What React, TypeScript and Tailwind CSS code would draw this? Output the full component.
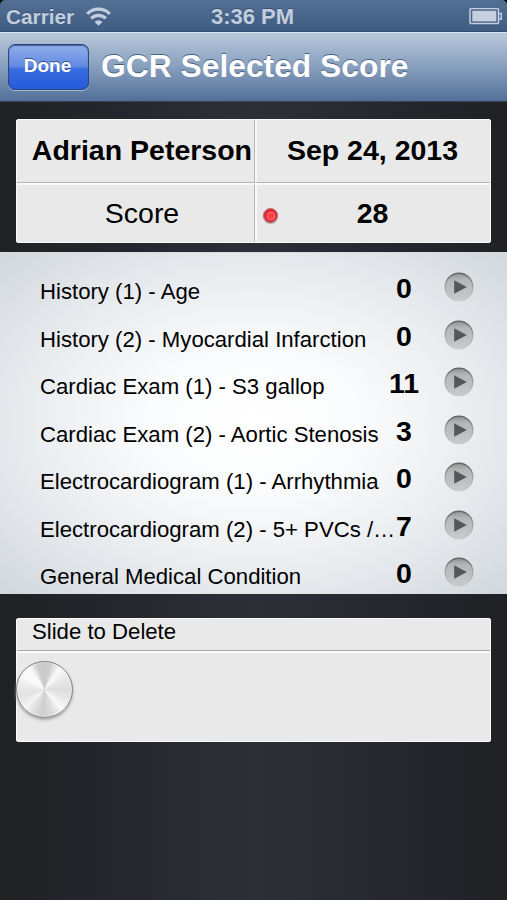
const rows = [
  { label: 'History (1) - Age', value: 0 },
  { label: 'History (2) - Myocardial Infarction', value: 0 },
  { label: 'Cardiac Exam (1) - S3 gallop', value: 11 },
  { label: 'Cardiac Exam (2) - Aortic Stenosis', value: 3 },
  { label: 'Electrocardiogram (1) - Arrhythmia', value: 0 },
  { label: 'Electrocardiogram (2) - 5+ PVCs /…', value: 7 },
  { label: 'General Medical Condition', value: 0 },
];

function WifiIcon() {
  return (
    <svg className="ml-[12px] h-[20px] w-[25px]" viewBox="0 0 25 20" fill="none" stroke="#c2cede" strokeWidth="3.2">
      <path d="M1.2 6.8A16 16 0 0 1 23.8 6.8" />
      <path d="M5.2 11.4A10.3 10.3 0 0 1 19.8 11.4" />
      <path d="M12.5 18.8L8.6 14.9A5.6 5.6 0 0 1 16.4 14.9Z" fill="#c2cede" stroke="none" />
    </svg>
  );
}

function BatteryIcon() {
  return (
    <svg className="h-[18px] w-[34px]" viewBox="0 0 34 18">
      <rect x="1" y="0.6" width="28.5" height="15" rx="1.2" fill="none" stroke="#c5d0df" strokeWidth="1.5" />
      <rect x="3.3" y="2.8" width="24" height="10.6" fill="#c5d0df" />
      <path d="M30 5.6H32.3V11H30" fill="none" stroke="#c5d0df" strokeWidth="1.5" />
    </svg>
  );
}

function PlayIcon() {
  return (
    <svg className="h-[30px] w-[30px]" viewBox="0 0 30 30">
      <defs>
        <linearGradient id="well" x1="0" y1="0" x2="0" y2="1">
          <stop offset="0" stopColor="#929394" />
          <stop offset=".25" stopColor="#b5b6b7" />
          <stop offset="1" stopColor="#c9cacb" />
        </linearGradient>
        <linearGradient id="rim" x1="0" y1="0" x2="0" y2="1">
          <stop offset="0" stopColor="#626364" />
          <stop offset=".5" stopColor="#a7a8a9" />
          <stop offset="1" stopColor="#cbcccd" />
        </linearGradient>
      </defs>
      <circle cx="15" cy="15" r="13.8" fill="url(#well)" stroke="url(#rim)" strokeWidth="1.4" />
      <path d="M10.2 8.2L22.8 15L10.2 21.8Z" fill="#555658" />
    </svg>
  );
}

export default function App() {
  return (
    <div className="flex h-[900px] w-[507px] flex-col overflow-hidden bg-[linear-gradient(90deg,#202123_0%,#26272e_25%,#2c3036_50%,#26272e_78%,#202124_100%)] font-['Liberation_Sans',Arial,sans-serif] text-black">
      <div className="h-[32px] shrink-0 bg-[linear-gradient(#000_50%,#344b6b_50%)]">
        <header className="grid h-[31px] grid-cols-[169px_167px_171px] items-center rounded-t-[5px] bg-[linear-gradient(#536f94,#3f5c82)] font-bold text-[#c2cede] [text-shadow:0_-1px_0_#38516f]">
          <div className="flex items-center pl-[6px] text-[20.8px]">
            <span>Carrier</span>
            <WifiIcon />
          </div>
          <span className="text-center text-[22px]">3:36 PM</span>
          <div className="flex justify-end pr-[4px]">
            <BatteryIcon />
          </div>
        </header>
      </div>
      <nav className="flex h-[69px] shrink-0 items-center border-t border-[#dce5ef] bg-[linear-gradient(#b9c8db_0%,#879fbe_50%,#546f98_100%)] pl-[8px]">
        <button className="mb-px h-[46px] w-[81px] rounded-[7px] border border-[#2c4678] bg-[linear-gradient(#92aee9_0%,#638be3_48%,#386bdd_55%,#245bdc_100%)] pr-[2px] text-[19px] font-bold text-white shadow-[0_1px_0_#a5b9d5,inset_0_1px_1px_#425e9b] [text-shadow:0_-1px_0_#334e83]">
          Done
        </button>
        <h1 className="ml-[12px] whitespace-nowrap text-[31.8px] font-bold leading-none text-white [text-shadow:0_-1.5px_0_#49607f]">
          GCR Selected Score
        </h1>
      </nav>
      <div className="h-px shrink-0 bg-[#35425a]" />

      <section className="mx-[16px] mt-[17px] grid h-[124px] w-[475px] shrink-0 grid-cols-[238px_1fr] grid-rows-[63px_1fr] rounded-[2px] border border-[#fafafa] bg-[#e9e9e9] text-[28.5px] leading-none">
        <div className="flex justify-end border-r border-b border-[#b5b5b5] pt-[16px] pr-[2px] font-bold whitespace-nowrap">Adrian Peterson</div>
        <div className="border-b border-l-2 border-b-[#b5b5b5] border-l-[#f8f8f8] pt-[16px] pr-[2px] text-center font-bold">Sep 24, 2013</div>
        <div className="border-t-2 border-r border-t-[#fafafa] border-r-[#b5b5b5] pt-[14px] pl-[13px] text-center">Score</div>
        <div className="grid grid-cols-[28px_1fr_30px] border-t-2 border-l-2 border-[#fafafa] pt-[14px] text-center font-bold">
          <span className="mt-[9px] ml-[6px] flex h-[15px] w-[15px] items-center justify-center rounded-full border border-[#c06a6e] bg-[#df2a32] shadow-[0_1px_1px_#aaa]">
            <span className="h-[8px] w-[8px] rounded-[3px] border border-[#f9777a] bg-[#ff4146]" />
          </span>
          <span>28</span>
        </div>
      </section>

      <main className="mt-[9px] h-[342px] shrink-0 border-t border-[#d8dbdf] bg-[radial-gradient(ellipse_at_50%_50%,#ffffff_0%,#fafbfc_30%,#e8ebee_65%,#d2d7dc_100%)] pt-[11px]">
        {rows.map((row) => (
          <div key={row.label} className="grid h-[47.5px] grid-cols-[356px_16px_1fr] pl-[40px]">
            <span className="whitespace-nowrap pt-[14.4px] text-[22.17px] leading-[27px]">{row.label}</span>
            <span className="flex justify-center pt-[9px] text-[28.5px] leading-[30px] font-bold">{row.value}</span>
            <span className="pt-[8px] pl-[32px]">
              <PlayIcon />
            </span>
          </div>
        ))}
      </main>

      <section className="mx-[16px] mt-[24px] h-[124px] w-[475px] shrink-0 rounded-[2px] border border-[#fafafa] bg-[#e9e9e9]">
        <div className="h-[32px] border-b border-[#a9a9a9] pl-[15px] text-[22.17px] leading-[25px]">Slide to Delete</div>
        <div className="border-t-2 border-[#fafafa] pt-[8px]">
          <div className="-ml-px h-[57px] w-[57px] rounded-full border border-[#808080] bg-[conic-gradient(#cacaca_0deg,#d0d0d0_15deg,#fafafa_35deg,#e6e6e6_65deg,#dedede_90deg,#e8e8e8_115deg,#fafafa_138deg,#dcdcdc_160deg,#cfcfcf_185deg,#dedede_205deg,#f4f4f4_228deg,#e2e2e2_255deg,#eaeaea_280deg,#fafafa_305deg,#fafafa_325deg,#cccccc_345deg,#cacaca_360deg)] shadow-[0_2px_3px_#aaa,inset_0_0_2px_#fff]" />
        </div>
      </section>
    </div>
  );
}
